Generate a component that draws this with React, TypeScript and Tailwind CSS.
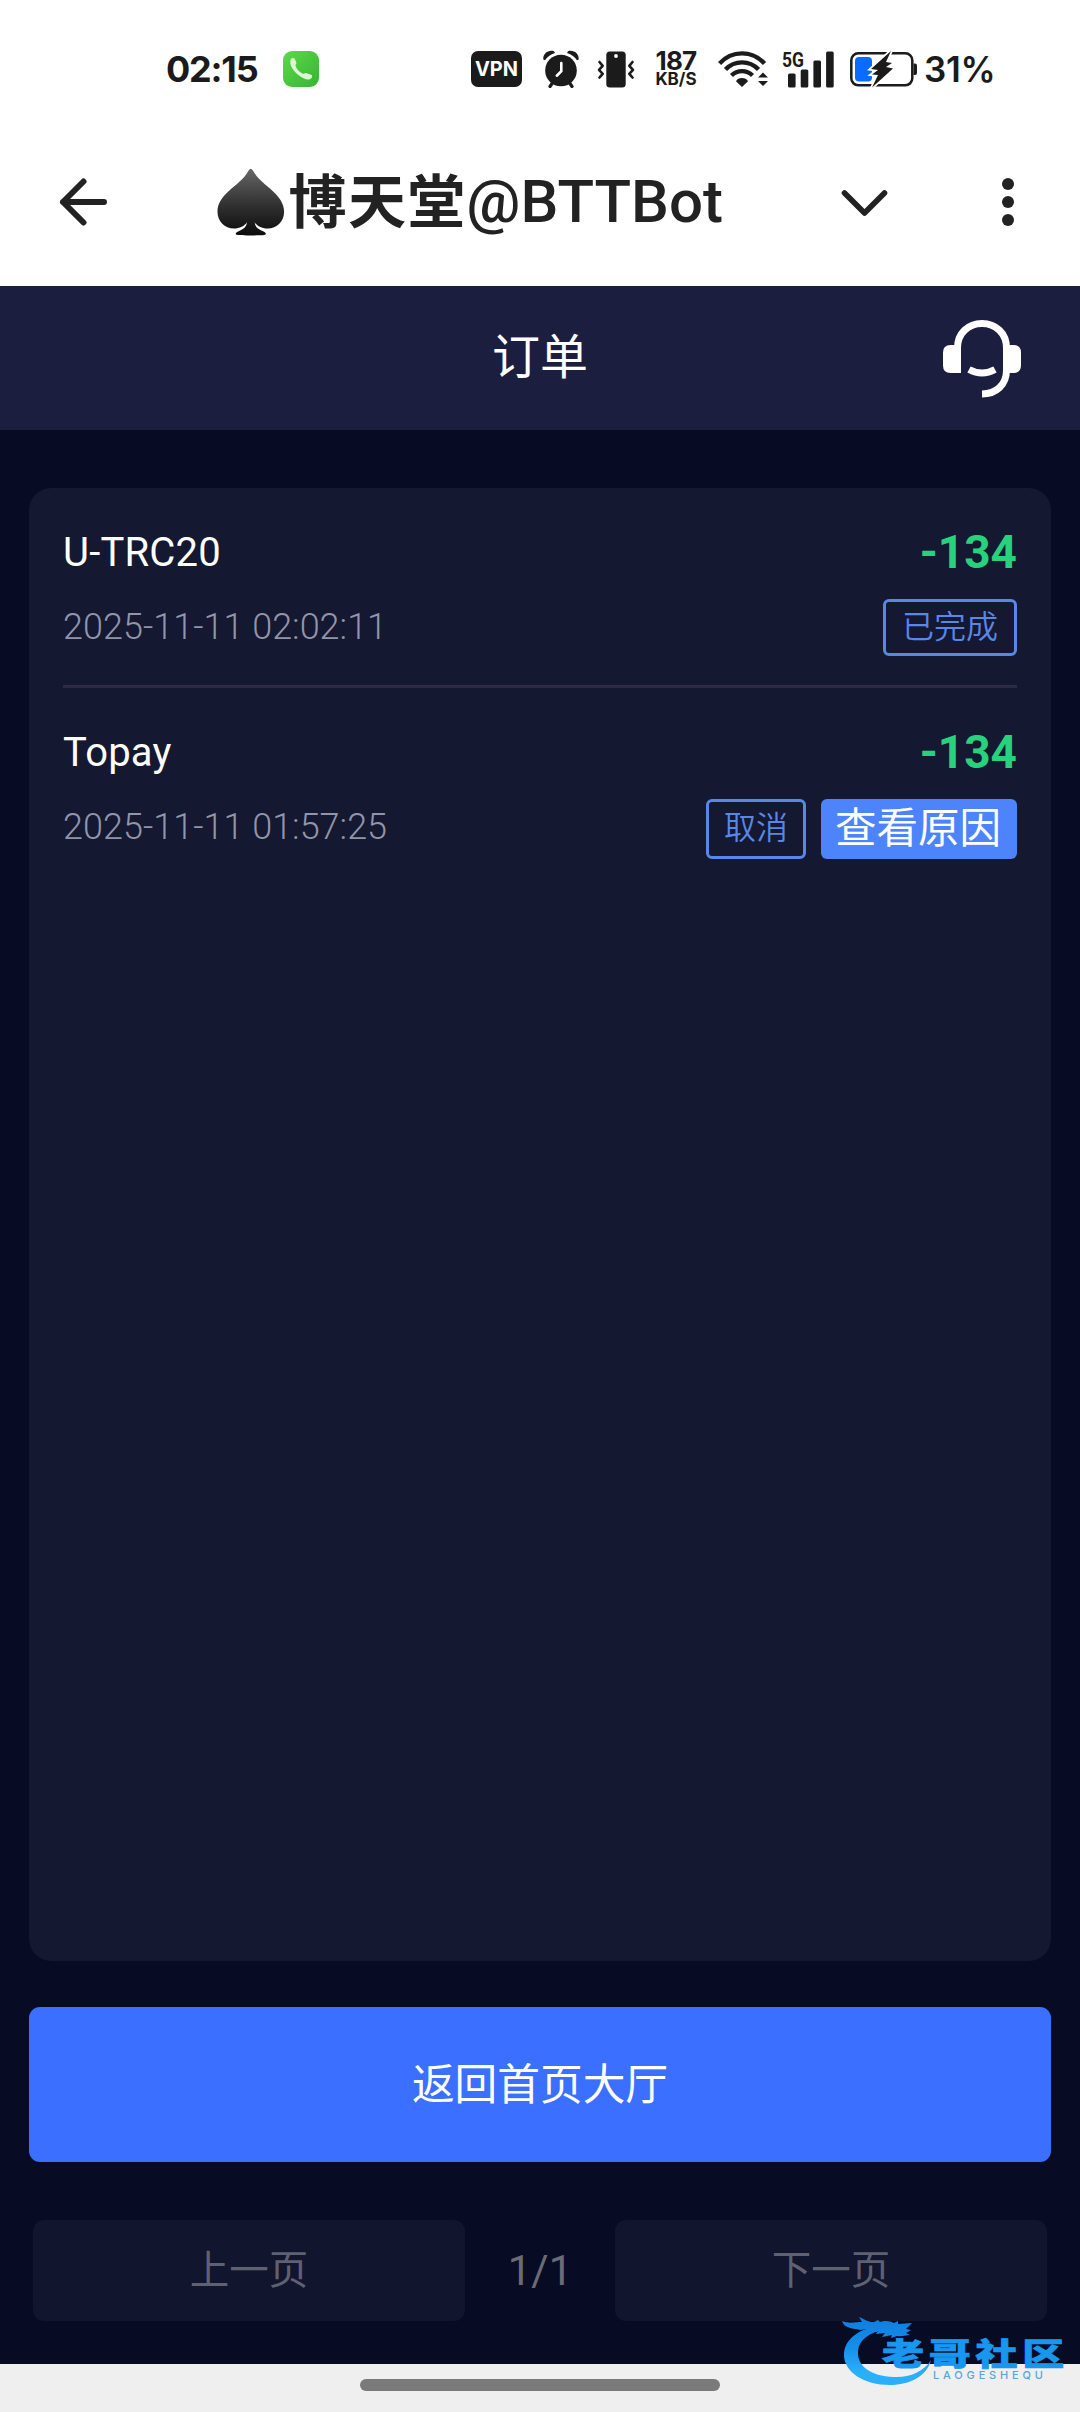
const orders = [
  {
    name: "U-TRC20",
    amount: "-134",
    time: "2025-11-11 02:02:11",
    status: "已完成",
  },
  {
    name: "Topay",
    amount: "-134",
    time: "2025-11-11 01:57:25",
    status: "取消",
    action: "查看原因",
  },
];

const PhoneIcon = () => (
  <svg className="ml-[26px] size-[36px]" viewBox="0 0 36 36">
    <defs>
      <linearGradient id="phone" x1="0" y1="0" x2="1" y2="1">
        <stop offset="0" stopColor="#5fd84c" />
        <stop offset="1" stopColor="#35b531" />
      </linearGradient>
    </defs>
    <rect width="36" height="36" rx="9" fill="url(#phone)" />
    <path
      d="M8 8c1.500-1.500 3.300-1 4 .6l1.300 3c.5 1.300-1 2-.8 3.200 1 3.400 4 6.400 7.300 8 1.200.4 2-1.200 3.300-.7l5 1.700c1.300.5 1.300 2.300.2 3.400-1.500 1.500-4.500 1.600-7.300.3C14.500 24.600 9.500 19.500 7.600 13.600 7 11.500 7 9.200 8 8Z"
      fill="#dcf8d2"
    />
  </svg>
);

const AlarmIcon = () => (
  <svg className="ml-[20px] h-[38px] w-[38px]" viewBox="0 0 38 38" fill="#1b1b1b">
    <circle cx="19" cy="20.500" r="15.800" />
    <path d="M1.300 9.500C.8 4 6 -.5 12 1.200L13 3C8.500 4.300 5 7 3 10.300Z" />
    <path d="M36.700 9.500C37.200 4 32 -.5 26 1.200L25 3C29.500 4.300 33 7 35 10.300Z" />
    <path d="M10 33.500 8 36.500M28 33.500l2 3" stroke="#1b1b1b" strokeWidth="3.200" strokeLinecap="round" />
    <path d="M19.300 13v8.300l-4.500 4.400" fill="none" stroke="#fff" strokeWidth="2.600" strokeLinecap="round" />
  </svg>
);

const VibrateIcon = () => (
  <svg className="ml-[17px] h-[37px] w-[38px]" viewBox="0 0 38 37">
    <rect x="9.300" y="0.500" width="19.400" height="36" rx="3.500" fill="#1b1b1b" />
    <circle cx="19" cy="5" r="1.900" fill="#fff" />
    <path
      d="M2.500 11l3.200 3.800-3.700 4 3.700 4-3.200 3.700M35.500 11l-3.200 3.800 3.700 4-3.700 4 3.200 3.700"
      fill="none"
      stroke="#1b1b1b"
      strokeWidth="2.600"
      strokeLinecap="round"
      strokeLinejoin="round"
    />
  </svg>
);

const WifiIcon = () => (
  <svg className="ml-[20px] h-[37px] w-[50px]" viewBox="0 0 50 37" fill="none" stroke="#1b1b1b">
    <path d="M1.500 12.500C14-1 34-1 46.500 12.500" strokeWidth="4.400" />
    <path d="M7.500 18.500C16.500 9 31.500 9 40.500 18.500" strokeWidth="4.400" />
    <path d="M13.500 24.500C19.500 18.700 28.500 18.700 34.500 24.500" strokeWidth="4.400" />
    <path d="M18 30.200C20 26 28 26 30 30.200L24 36Z" fill="#1b1b1b" stroke="none" />
    <path d="M40 26.500h10L45 21.500ZM40 30h10l-5 5Z" fill="#1b1b1b" stroke="none" />
  </svg>
);

const SignalIcon = () => (
  <svg className="ml-[14px] h-[37px] w-[53px] overflow-visible" viewBox="0 0 53 37" fill="#1b1b1b">
    <text x="0" y="16" fontSize="21" fontWeight="700" textLength="22" lengthAdjust="spacingAndGlyphs" fontFamily="Roboto, sans-serif">
      5G
    </text>
    <rect x="6" y="22.500" width="7.600" height="14" rx="1.500" />
    <rect x="18.700" y="18.500" width="7.600" height="18" rx="1.500" />
    <rect x="31.400" y="9.500" width="7.600" height="27" rx="1.500" />
    <rect x="44.100" y="0.500" width="7.600" height="36" rx="1.500" />
  </svg>
);

const BatteryIcon = () => (
  <svg className="ml-[15px] h-[38px] w-[68px]" viewBox="0 0 68 38">
    <rect x="1.300" y="3.300" width="61" height="32" rx="7" fill="#fff" stroke="#1b1b1b" strokeWidth="2.500" />
    <path d="M63.500 13.500h1.500q2 0 2 2v7.500q0 2-2 2h-1.500Z" fill="#1b1b1b" />
    <rect x="5" y="7" width="17" height="24.500" rx="4" fill="#0a6cff" />
    <path
      d="M41 1 21 19l7 1-6 4.500 6 .5-6 12.500L43 18.500 36 17l6-4-6-1Z"
      fill="#1b1b1b"
      stroke="#fff"
      strokeWidth="3.500"
      paintOrder="stroke"
    />
  </svg>
);

const StatusBar = () => (
  <div className="flex h-[138px] items-center pl-[166px] font-['Inter',sans-serif] text-[#1b1b1b]">
    <div className="w-[91px] whitespace-nowrap text-[36px] leading-none font-bold tracking-[-1.200px]">02:15</div>
    <PhoneIcon />
    <div className="ml-[152px] flex h-[36px] w-[51px] items-center justify-center rounded-[7px] bg-[#1b1b1b] text-[20px] leading-none font-bold text-white">
      VPN
    </div>
    <AlarmIcon />
    <VibrateIcon />
    <div className="ml-[19px] flex w-[44px] flex-col items-center whitespace-nowrap">
      <span className="text-[26px] leading-[21px] font-bold tracking-[-0.800px]">187</span>
      <span className="text-[17px] leading-[17px] font-bold">KB/S</span>
    </div>
    <WifiIcon />
    <SignalIcon />
    <BatteryIcon />
    <div className="ml-[6px] whitespace-nowrap text-[35px] leading-none font-semibold tracking-[-0.300px]">31%</div>
  </div>
);

const SpadeIcon = () => (
  <svg className="h-[70px] w-[70px]" viewBox="0 0 70 70">
    <defs>
      <linearGradient id="spade" x1="0" y1="0" x2="0" y2="1">
        <stop offset="0" stopColor="#666" />
        <stop offset="0.550" stopColor="#303030" />
        <stop offset="1" stopColor="#0c0c0c" />
      </linearGradient>
    </defs>
    <path
      d="M35 .5C36.500.5 37.500 3 39.500 6 46.500 17.500 69.500 27 69.500 45c0 10-7.500 17.500-17 17.500-6 0-11-2.500-13.500-6.500 .5 5 3.500 7 7.500 8.800 3 1.200 4.500 2.200 4 3.700-.3 1-5 1.200-15.500 1.200s-15.200-.2-15.500-1.200c-.5-1.500 1-2.500 4-3.700 4-1.800 7-3.800 7.500-8.800-2.500 4-7.500 6.500-13.500 6.500C8 62.500.5 55 .5 45 .5 27 23.500 17.500 30.500 6 32.500 3 33.500.5 35 .5Z"
      fill="url(#spade)"
    />
  </svg>
);

const TitleBar = () => (
  <div className="flex h-[148px] items-center pb-[20px] text-[#222]">
    <svg className="ml-[59px] size-[50px]" viewBox="0 0 50 50" fill="none" stroke="#222" strokeWidth="6" strokeLinecap="round" strokeLinejoin="round">
      <path d="M45 25H4M24.500 4.500 4 25l20.500 20.500" />
    </svg>
    <div className="ml-[108px] flex w-[506px] items-center whitespace-nowrap">
      <SpadeIcon />
      <h1 className="ml-[4px] text-[60px] leading-none font-medium">
        <span className="inline-block w-[178px] translate-y-[1px] text-[58px] font-bold tracking-[1.300px]">博天堂</span>@BTTBot
      </h1>
    </div>
    <svg className="ml-[117px] h-[30px] w-[50px]" viewBox="0 0 50 30" fill="none" stroke="#222" strokeWidth="5.600" strokeLinecap="round" strokeLinejoin="round">
      <path d="M4.500 6 24.500 26 44.500 6" />
    </svg>
    <svg className="ml-[112px] h-[50px] w-[12px]" viewBox="0 0 12 50" fill="#222">
      <circle cx="6" cy="7" r="6" />
      <circle cx="6" cy="25" r="6" />
      <circle cx="6" cy="43" r="6" />
    </svg>
  </div>
);

const HeadsetIcon = () => (
  <svg className="mt-[2px] h-[78px] w-[78px]" viewBox="0 0 78 78" fill="none" stroke="#fff">
    <path d="M14.500 50V28C14.500 13 25.500 3.500 39 3.500S63.500 13 63.500 28V50C63.500 65 53 74 39 74" strokeWidth="7" />
    <path d="M18 25v28H7.500Q0 53 0 45.500V32.500Q0 25 7.500 25ZM60 25v28h10.500Q78 53 78 45.500V32.500Q78 25 70.500 25Z" fill="#fff" stroke="none" />
    <path d="M26 49.500Q39 56.500 52 49.500" strokeWidth="7" />
  </svg>
);

const Watermark = () => (
  <svg className="absolute top-[2312px] left-[840px] h-[76px] w-[240px] overflow-visible" viewBox="0 0 240 76">
    <defs>
      <linearGradient id="mark" gradientUnits="userSpaceOnUse" x1="0" y1="0" x2="0" y2="76">
        <stop offset="0" stopColor="#1179dd" />
        <stop offset="0.450" stopColor="#148ee9" />
        <stop offset="0.800" stopColor="#2ab0fb" />
        <stop offset="1" stopColor="#2ab0fb" />
      </linearGradient>
    </defs>
    <g fill="url(#mark)">
      <path d="M36 14C14 19 4 30 4 43 4 60 24 73 50 73 70 73 87 64 91 48 84 60 68 66 54 65 30 64 17 54 18 39 19 28 28 21 46 17Z" />
      <path d="M2 9c7 3 14 1 20 1l-3-5c7 3 9 5 15 5l4-2 2 2c6-2 10-1 14 1l4-2v3l14-1-6 6 5 1-5 3 4 2c-5 0-8 2-13 1l-6 2 1-3-10 2 3-4-9 1 2-3-12 3 2-5-8 1c-6-2-16-1-18-9Z" />
    </g>
    <text
      transform="translate(42 52.500) scale(1 .74)"
      fontFamily="'Noto Sans CJK SC', sans-serif"
      fontSize="42"
      fontWeight="900"
      letterSpacing="4.800"
      fill="#1996ee"
      stroke="#1996ee"
      strokeWidth="1"
    >
      老哥社区
    </text>
    <text x="93" y="67" fontFamily="Inter, sans-serif" fontSize="11" fontWeight="500" textLength="110" fill="#58a5dc">
      LAOGESHEQU
    </text>
  </svg>
);

const App = () => {
  return (
    <div className="relative flex h-[2412px] w-[1080px] flex-col overflow-hidden bg-white font-['Roboto','Noto_Sans_CJK_SC',sans-serif]">
      <StatusBar />
      <TitleBar />

      <main className="flex h-[2078px] flex-col bg-[#070b24]">
        {/* Page header */}
        <header className="grid h-[144px] grid-cols-3 items-center bg-[#1c1e40] pr-[59px] pl-[59px] text-white">
          <div></div>
          <h2 className="text-center text-[48px] leading-none">订单</h2>
          <div className="flex justify-end">
            <HeadsetIcon />
          </div>
        </header>

        {/* Order list */}
        <section className="mx-[29px] mt-[58px] h-[1473px] rounded-[22px] bg-[#141830] px-[34px]">
          {orders.map((order) => (
            <div key={order.time} className="h-[200px] border-b-[3px] border-[#2c2b43] pt-[33px] last:border-transparent">
              <div className="flex h-[60px] items-center justify-between">
                <span className="pt-[3px] text-[40px] leading-none tracking-[0.200px] text-white">{order.name}</span>
                <span className="pt-px text-[46px] leading-none font-bold text-[#28d17c]">{order.amount}</span>
              </div>
              <div className="mt-[18px] flex items-start justify-between">
                <span className="text-[36px] leading-[57px] font-light text-[#9295aa]">{order.time}</span>
                <div className="flex gap-[15px]">
                  <span
                    className={`rounded-[6px] border-[3px] border-[#5a86e8] text-[32px] font-[350] text-[#5a86e8] ${
                      order.action ? "h-[60px] px-[15px] leading-[52px]" : "h-[57px] px-[16px] leading-[51px]"
                    }`}
                  >
                    {order.status}
                  </span>
                  {order.action && (
                    <button className="h-[60px] w-[196px] rounded-[6px] bg-[#4d84fb] pr-[2px] text-[41.500px] leading-[58px] text-white">
                      {order.action}
                    </button>
                  )}
                </div>
              </div>
            </div>
          ))}
        </section>

        <button className="mx-[29px] mt-[46px] h-[155px] rounded-[11px] bg-[#3b6fff] pt-[2px] text-[42.700px] leading-none text-white">
          返回首页大厅
        </button>

        {/* Pagination */}
        <div className="mx-[33px] mt-[58px] flex h-[101px] items-center justify-between text-[39.500px] text-[#5f6173]">
          <button className="h-full w-[432px] rounded-[11px] bg-[#11152e]">上一页</button>
          <span className="text-[42px] text-[#6a6b76]">1/1</span>
          <button className="h-full w-[432px] rounded-[11px] bg-[#11152e]">下一页</button>
        </div>
      </main>

      {/* Gesture bar */}
      <div className="flex h-[48px] justify-center bg-[#efefef] pt-[15px]">
        <div className="h-[12px] w-[360px] rounded-full bg-[#7a7a7a]"></div>
      </div>

      <Watermark />
    </div>
  );
};

export default App;
